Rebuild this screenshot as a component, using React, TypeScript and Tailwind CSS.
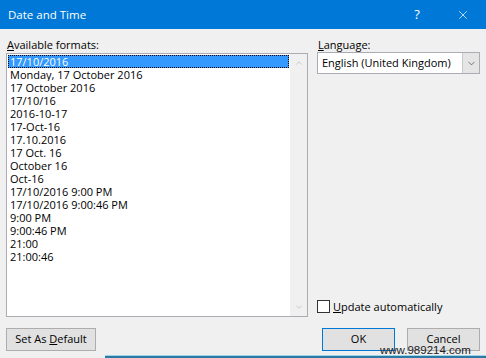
import { ChevronDown, ChevronUp, X } from "lucide-react";

const formats = [
  "17/10/2016",
  "Monday, 17 October 2016",
  "17 October 2016",
  "17/10/16",
  "2016-10-17",
  "17-Oct-16",
  "17.10.2016",
  "17 Oct. 16",
  "October 16",
  "Oct-16",
  "17/10/2016 9:00 PM",
  "17/10/2016 9:00:46 PM",
  "9:00 PM",
  "9:00:46 PM",
  "21:00",
  "21:00:46",
];

export default function App() {
  return (
    <div className="relative flex h-[358px] w-[486px] flex-col overflow-hidden bg-[#f0f0f0] font-['Open_Sans',sans-serif] text-[11px] text-black">
      {/* title bar */}
      <div className="flex h-[29px] shrink-0 items-center bg-[#0078d7] text-white">
        <span className="flex-1 pl-[8px] text-[11.5px]">Date and Time</span>
        <span className="flex h-full w-[46px] items-center justify-center text-[13px]">?</span>
        <span className="flex h-full w-[46px] items-center justify-center">
          <X className="h-[14px] w-[14px]" strokeWidth={1.2} />
        </span>
      </div>

      <div className="flex flex-col px-[6px] pt-[8px]">
        <div className="flex">
          {/* formats */}
          <div className="flex w-[302px] flex-col">
            <div className="h-[16px] pl-[1px] leading-[16px]">
              <span className="underline underline-offset-1">A</span>vailable formats:
            </div>
            <div className="flex h-[264px] border border-[#abadb3] bg-white">
              <div className="flex-1 p-[1px]">
                {formats.map((f, i) => (
                  <div
                    key={f}
                    className={
                      i === 0
                        ? "h-[13px] overflow-hidden whitespace-nowrap border border-dotted border-black bg-[#3399ff] pl-[1px] leading-[11px] text-white"
                        : "h-[13px] overflow-hidden whitespace-nowrap pl-[2px] leading-[13px]"
                    }
                  >
                    {f}
                  </div>
                ))}
              </div>
              <div className="flex w-[17px] flex-col items-center justify-between bg-[#f0f0f0] py-[4px] text-[#c2c2c2]">
                <ChevronUp className="h-[10px] w-[10px]" strokeWidth={2} />
                <ChevronDown className="h-[10px] w-[10px]" strokeWidth={2} />
              </div>
            </div>
          </div>

          {/* language */}
          <div className="ml-[9px] flex flex-1 flex-col">
            <div className="h-[15px] pl-[1px] leading-[15px]">
              <span className="underline underline-offset-1">L</span>anguage:
            </div>
            <div className="flex h-[22px] items-center border border-[#abadb3] bg-white pl-[4px]">
              <span className="flex-1 whitespace-nowrap">English (United Kingdom)</span>
              <span className="flex h-full w-[17px] items-center justify-center border-l border-[#c8c8c8] bg-[#e5e5e5] text-[#444]">
                <ChevronDown className="h-[11px] w-[11px]" strokeWidth={1.5} />
              </span>
            </div>
            <div className="mt-auto mb-[2px] flex items-center gap-[3px]">
              <span className="h-[13px] w-[13px] border border-[#333] bg-white" />
              <span>
                <span className="underline underline-offset-1">U</span>pdate automatically
              </span>
            </div>
          </div>
        </div>

        {/* buttons */}
        <div className="mt-[11px] flex items-center">
          <button className="h-[23px] w-[90px] border border-[#adadad] bg-[#e1e1e1]">
            Set As <span className="underline underline-offset-1">D</span>efault
          </button>
          <div className="flex-1" />
          <button className="h-[23px] w-[73px] border border-[#0078d7] bg-[#e1e1e1]">OK</button>
          <button className="ml-[12px] h-[23px] w-[73px] border border-[#adadad] bg-[#e1e1e1]">Cancel</button>
        </div>
      </div>

      <div className="mt-auto ml-[105px] h-[3px] border-t border-[#9fd3e6] bg-[#2a7aa6]" />

      <span className="absolute top-[342px] left-[380px] font-['Liberation_Sans',sans-serif] text-[11.5px] text-[#222]">
        www.989214.com
      </span>
    </div>
  );
}
